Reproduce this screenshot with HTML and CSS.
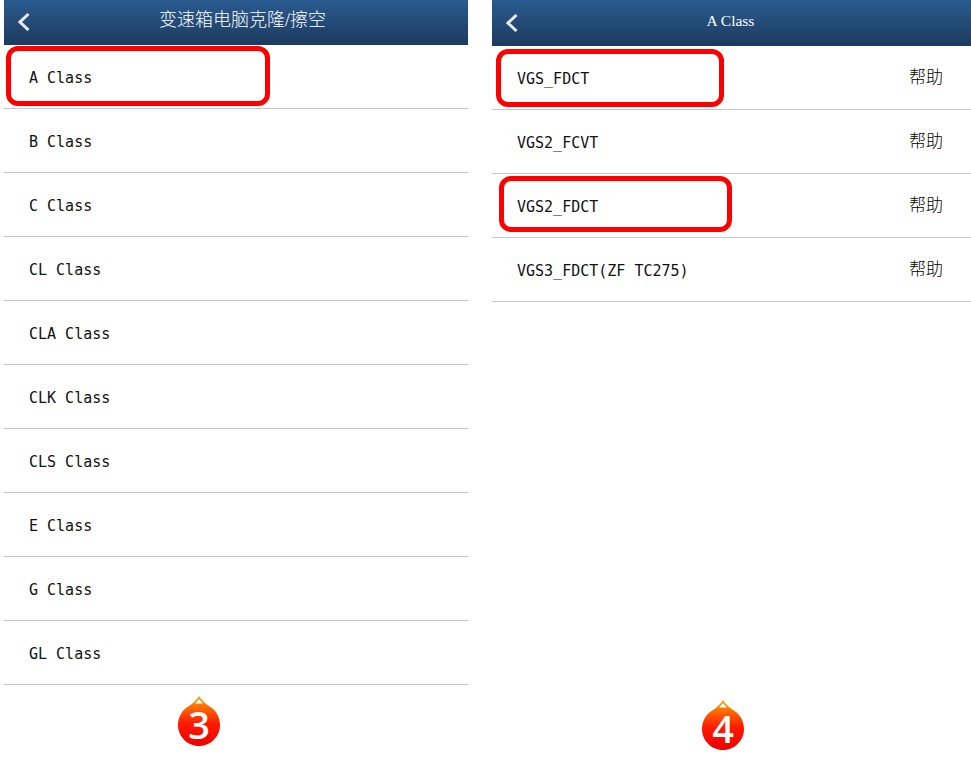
FILE: index.html
```html
<!DOCTYPE html>
<html lang="zh-CN">
  <head>
    <meta charset="UTF-8" />
    <meta name="viewport" content="width=device-width, initial-scale=1.0" />
    <title>变速箱电脑克隆/擦空</title>
    <link rel="stylesheet" href="styles.css">
  </head>
  <body>
    <div class="page">
      <section class="panel panel-left">
        <header class="topbar">
          <svg class="back" viewBox="0 0 12 18" aria-hidden="true"><path d="M10.500 1 2 9l8.500 8" /></svg>
          <h1 class="title title-cn">变速箱电脑克隆/擦空</h1>
        </header>
        <ul class="list">
          <li class="row"><span class="mark mark-a"></span>A Class</li>
          <li class="row">B Class</li>
          <li class="row">C Class</li>
          <li class="row">CL Class</li>
          <li class="row">CLA Class</li>
          <li class="row">CLK Class</li>
          <li class="row">CLS Class</li>
          <li class="row">E Class</li>
          <li class="row">G Class</li>
          <li class="row">GL Class</li>
        </ul>
        <div class="step">
          <div class="drop">
            <svg class="drop-bg" viewBox="0 0 42 50" aria-hidden="true"><use href="#drop-shape" /></svg>
            <span class="drop-num">3</span>
          </div>
        </div>
      </section>

      <section class="panel panel-right">
        <header class="topbar">
          <svg class="back" viewBox="0 0 12 18" aria-hidden="true"><path d="M10.500 1 2 9l8.500 8" /></svg>
          <h1 class="title">A Class</h1>
        </header>
        <ul class="list">
          <li class="row"><span class="mark mark-b"></span>VGS_FDCT<span class="help">帮助</span></li>
          <li class="row">VGS2_FCVT<span class="help">帮助</span></li>
          <li class="row"><span class="mark mark-c"></span>VGS2_FDCT<span class="help">帮助</span></li>
          <li class="row">VGS3_FDCT(ZF TC275)<span class="help">帮助</span></li>
        </ul>
        <div class="step">
          <div class="drop">
            <svg class="drop-bg" viewBox="0 0 42 50" aria-hidden="true"><use href="#drop-shape" /></svg>
            <span class="drop-num">4</span>
          </div>
        </div>
      </section>
    </div>

    <svg class="defs" aria-hidden="true">
      <defs>
        <linearGradient id="drop-fill" x1="0" y1="0" x2="0" y2="1">
          <stop offset="0" stop-color="#ffa200" />
          <stop offset="0.55" stop-color="#ff1a00" />
          <stop offset="1" stop-color="#f00000" />
        </linearGradient>
        <g id="drop-shape">
          <path d="M21 0C23.500 4 27 7.500 31 10 37.500 13.500 42 20.500 42 29 42 40.600 32.600 50 21 50 9.400 50 0 40.600 0 29 0 20.500 4.500 13.500 11 10 15 7.500 18.500 4 21 0Z" fill="url(#drop-fill)" />
          <path d="M21 3 25 7.500H17Z" fill="#fff" />
        </g>
      </defs>
    </svg>
  </body>
</html>
```

FILE: styles.css
```css
html,
body {
  margin: 0;
  padding: 0;
  background-color: #fff;
}
.page {
  display: flex;
  height: 768px;
  overflow: hidden;
  padding-left: 4px;
  gap: 24px;
}
.panel {
  display: flex;
  flex-direction: column;
}
.panel-left {
  width: 464px;
}
.panel-right {
  width: 479px;
}
.topbar {
  display: flex;
  align-items: center;
  justify-content: center;
  position: relative;
  height: 45px;
  background: linear-gradient(#2a5b90, #1d3a5e);
}
.panel-right .topbar {
  height: 46px;
}
.back {
  position: absolute;
  left: 14px;
  top: 13px;
  width: 12px;
  height: 18px;
  fill: none;
  stroke: #e6e9ee;
  stroke-width: 3;
}
.panel-right .back {
  top: 14px;
}
.title {
  margin: 0 2px 4px 0;
  color: #fff;
  font-family: 'Liberation Serif', 'Noto Sans CJK SC', serif;
  font-size: 15.500px;
  font-weight: normal;
}
.title-cn {
  margin: 0 0 10px;
  font-size: 18px;
  font-weight: 300;
  padding-left: 13px;
}
.list {
  list-style: none;
  margin: 0;
  padding: 0;
}
.row {
  display: flex;
  align-items: center;
  justify-content: space-between;
  position: relative;
  box-sizing: border-box;
  height: 64px;
  padding: 2px 28px 0 25px;
  border-bottom: 1px solid #c6c6c6;
  color: #111;
  font-family: 'DejaVu Sans Mono', monospace;
  font-size: 15px;
  white-space: pre;
}
.help {
  margin-bottom: 6px;
  color: #000;
  font-family: 'Noto Sans CJK SC', sans-serif;
  font-size: 17px;
  font-weight: 300;
}
.mark {
  position: absolute;
  box-sizing: border-box;
  border: 5px solid #f00;
  border-radius: 12px;
}
.mark-a {
  left: 2px;
  top: 1px;
  width: 264px;
  height: 60px;
}
.mark-b {
  left: 4px;
  top: 3px;
  width: 228px;
  height: 58px;
}
.mark-c {
  left: 7px;
  top: 2px;
  width: 233px;
  height: 56px;
}
.step {
  display: flex;
  margin-top: auto;
}
.panel-left .step {
  padding: 0 0 22px 174px;
}
.panel-right .step {
  padding: 0 0 18px 210px;
}
.drop {
  display: grid;
  justify-items: center;
  width: 42px;
  height: 50px;
}
.drop-bg {
  grid-area: 1 / 1;
  width: 42px;
  height: 50px;
}
.drop-num {
  grid-area: 1 / 1;
  margin-top: 13px;
  color: #fff;
  font-family: 'Open Sans', sans-serif;
  font-size: 38px;
  font-weight: 600;
  line-height: 30px;
}
.defs {
  position: absolute;
  width: 0;
  height: 0;
}
```
